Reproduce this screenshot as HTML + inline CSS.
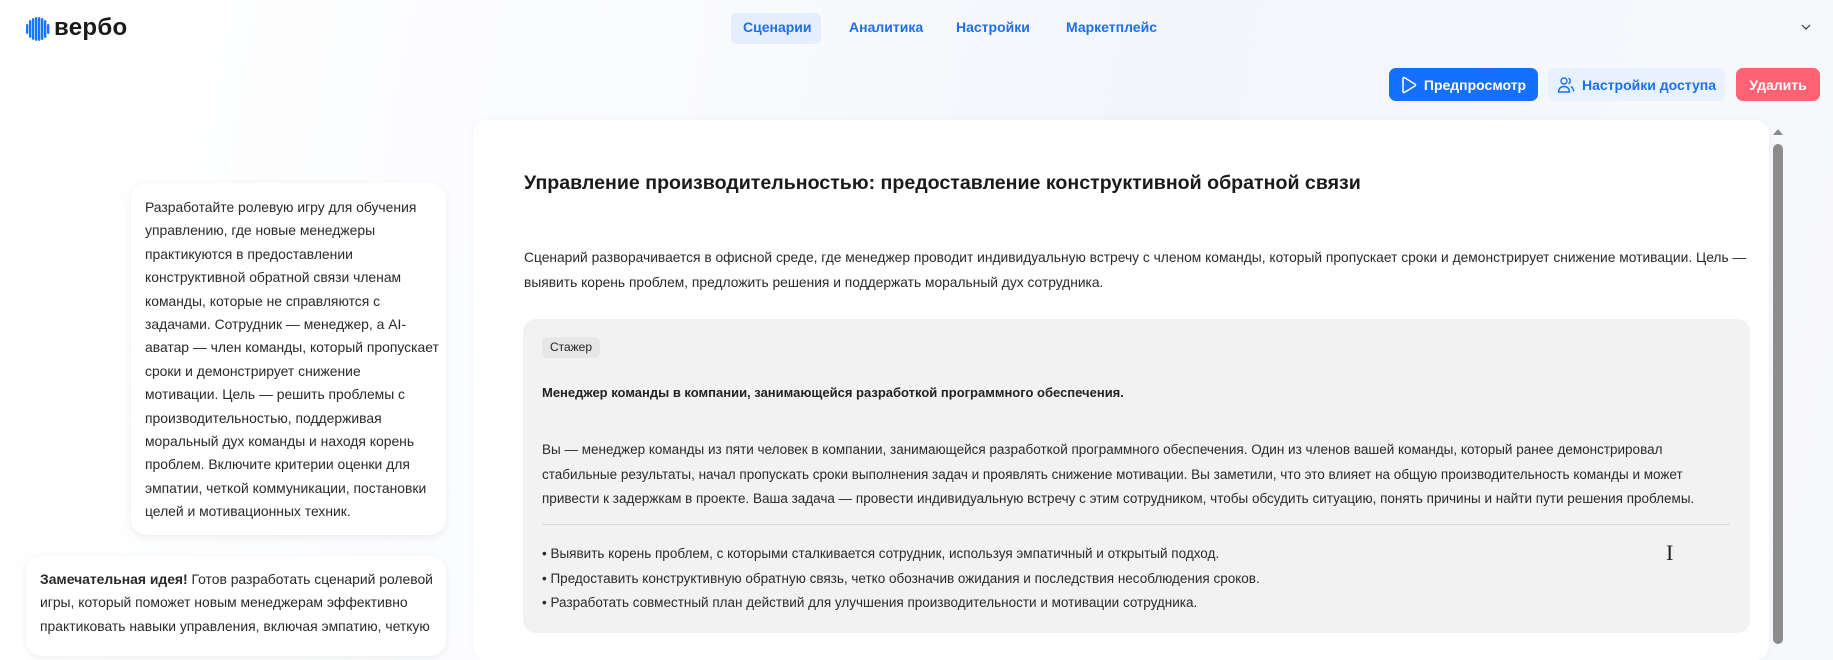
<!DOCTYPE html>
<html><head><meta charset="utf-8"><style>
*{margin:0;padding:0;box-sizing:border-box}
body{width:1833px;height:637px;overflow:hidden;font-family:"Liberation Sans","Noto Sans CJK SC",sans-serif;color:#1f1f1f;background:linear-gradient(100deg,#ffffff 0%,#fafbfd 35%,#f2f5fb 60%,#f8f9fc 100%);position:relative}
.abs{position:absolute}
.nav{font-size:14px;font-weight:bold;color:#1f6fe8;top:19px}
.btn{position:absolute;top:68px;height:33px;border-radius:7px;font-size:14px;font-weight:bold;display:flex;align-items:center;justify-content:center;gap:7px}
.card{position:absolute;left:473px;top:120px;width:1296px;height:540px;background:#fff;border-radius:14px;box-shadow:0 0 8px rgba(0,0,0,.04)}
.nw{white-space:nowrap}
.bub{position:absolute;background:#fff;border-radius:16px;box-shadow:0 2px 8px rgba(0,0,0,.07);font-size:13.9px;line-height:23.4px;color:#2a2a2a}
</style></head><body>
<svg class="abs" style="left:26px;top:17px" width="24" height="24" viewBox="0 0 24 24">
<g fill="#1677ff"><rect x="0" y="7" width="2.4" height="10" rx="1.2"/><rect x="3" y="3" width="2.4" height="18" rx="1.2"/><rect x="6" y="1" width="2.4" height="22" rx="1.2"/><rect x="9" y="0" width="2.4" height="24" rx="1.2"/><rect x="12" y="0" width="2.4" height="24" rx="1.2"/><rect x="15" y="1" width="2.4" height="22" rx="1.2"/><rect x="18" y="3" width="2.4" height="18" rx="1.2"/><rect x="21" y="7" width="2.4" height="10" rx="1.2"/></g></svg>
<div class="abs" style="left:54px;top:14px;font-size:24px;font-weight:bold;color:#1a1a1a;letter-spacing:0.3px">вербо</div>
<div class="abs" style="left:731px;top:13px;width:90px;height:31px;background:#e4eefc;border-radius:6px"></div>
<div class="nav abs" style="left:743px">Сценарии</div>
<div class="nav abs" style="left:849px">Аналитика</div>
<div class="nav abs" style="left:956px">Настройки</div>
<div class="nav abs" style="left:1066px">Маркетплейс</div>
<svg class="abs" style="left:1801px;top:24px" width="10" height="7" viewBox="0 0 10 7"><path d="M1 1l4 4 4-4" stroke="#333" fill="none" stroke-width="1.2"/></svg>
<div class="btn" style="left:1389px;width:149px;background:#1570ff;color:#fff"><svg width="16" height="18" viewBox="0 0 16 18"><path d="M2 2.5v13a1 1 0 0 0 1.5.9l10.5-6.5a1 1 0 0 0 0-1.8L3.5 1.6A1 1 0 0 0 2 2.5z" stroke="#fff" fill="none" stroke-width="1.5"/></svg>Предпросмотр</div>
<div class="btn" style="left:1548px;width:177px;background:#e8f2fe;color:#1f6fe8"><svg width="18" height="18" viewBox="0 0 18 18" fill="none" stroke="#1f6fe8" stroke-width="1.4"><circle cx="7" cy="5" r="3"/><path d="M1.5 16c0-3.5 2.5-5.5 5.5-5.5s5.5 2 5.5 5.5z"/><path d="M11.5 2.3a3 3 0 0 1 0 5.4M14 10.5c1.5.8 2.5 2.5 2.5 5"/></svg>Настройки доступа</div>
<div class="btn" style="left:1736px;width:84px;background:#ff6273;color:#fff">Удалить</div>
<div class="bub" style="left:131px;top:183px;width:315px;height:352px;padding:13px 14px 0 14px">
<div class="nw">Разработайте ролевую игру для обучения<br>управлению, где новые менеджеры<br>практикуются в предоставлении<br>конструктивной обратной связи членам<br>команды, которые не справляются с<br>задачами. Сотрудник — менеджер, а AI-<br>аватар — член команды, который пропускает<br>сроки и демонстрирует снижение<br>мотивации. Цель — решить проблемы с<br>производительностью, поддерживая<br>моральный дух команды и находя корень<br>проблем. Включите критерии оценки для<br>эмпатии, четкой коммуникации, постановки<br>целей и мотивационных техник.</div></div>
<div class="bub" style="left:26px;top:556px;width:420px;height:100px;padding:12px 14px 0 14px">
<div class="nw"><b>Замечательная идея!</b> Готов разработать сценарий ролевой<br>игры, который поможет новым менеджерам эффективно<br>практиковать навыки управления, включая эмпатию, четкую</div></div>
<div class="card"></div>
<div class="abs nw" style="left:524px;top:172px;font-size:19.6px;font-weight:bold;color:#1a1a1a">Управление производительностью: предоставление конструктивной обратной связи</div>
<div class="abs nw" style="left:524px;top:246px;font-size:13.8px;line-height:24.5px;color:#2a2a2a">Сценарий разворачивается в офисной среде, где менеджер проводит индивидуальную встречу с членом команды, который пропускает сроки и демонстрирует снижение мотивации. Цель —<br>выявить корень проблем, предложить решения и поддержать моральный дух сотрудника.</div>
<div class="abs" style="left:523px;top:319px;width:1227px;height:314px;background:#f2f2f2;border-radius:13px"></div>
<div class="abs" style="left:542px;top:337px;width:58px;height:21px;background:#e6e6e6;border-radius:6px;font-size:12px;line-height:21px;text-align:center;color:#222">Стажер</div>
<div class="abs nw" style="left:542px;top:385px;font-size:13px;font-weight:bold;color:#222">Менеджер команды в компании, занимающейся разработкой программного обеспечения.</div>
<div class="abs nw" style="left:542px;top:438px;font-size:13.5px;line-height:24.5px;color:#2a2a2a">Вы — менеджер команды из пяти человек в компании, занимающейся разработкой программного обеспечения. Один из членов вашей команды, который ранее демонстрировал<br>стабильные результаты, начал пропускать сроки выполнения задач и проявлять снижение мотивации. Вы заметили, что это влияет на общую производительность команды и может<br>привести к задержкам в проекте. Ваша задача — провести индивидуальную встречу с этим сотрудником, чтобы обсудить ситуацию, понять причины и найти пути решения проблемы.</div>
<div class="abs" style="left:542px;top:524px;width:1188px;height:1px;background:#dcdcdc"></div>
<div class="abs nw" style="left:542px;top:542px;font-size:13.5px;line-height:24.5px;color:#2a2a2a">• Выявить корень проблем, с которыми сталкивается сотрудник, используя эмпатичный и открытый подход.<br>• Предоставить конструктивную обратную связь, четко обозначив ожидания и последствия несоблюдения сроков.<br>• Разработать совместный план действий для улучшения производительности и мотивации сотрудника.</div>
<div class="abs" style="left:1666px;top:540px;font-size:22px;font-family:'Liberation Serif',serif;color:#222">I</div>
<svg class="abs" style="left:1771px;top:127px" width="14" height="10" viewBox="0 0 14 10"><path d="M2 8L7 2l5 6z" fill="#8a8a8a"/></svg>
<div class="abs" style="left:1773px;top:144px;width:10px;height:500px;background:#8c8c8c;border-radius:5px"></div>
</body></html>
